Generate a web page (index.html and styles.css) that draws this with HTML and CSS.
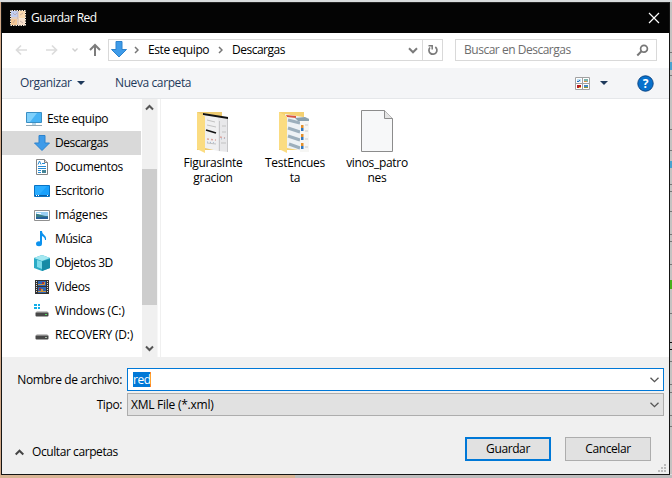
FILE: index.html
```html
<!DOCTYPE html>
<html lang="es">
<head>
<meta charset="utf-8">
<title>Guardar Red</title>
<link rel="stylesheet" href="styles.css">
</head>
<body>
<svg class="backdrop" width="672" height="478" shape-rendering="crispEdges">
  <rect width="672" height="478" fill="#d9dcde"/>
  <rect y="2" width="2" height="476" fill="#d2a988"/>
  <rect y="475" width="295" height="3" fill="#d9b695"/>
  <rect x="295" y="475" width="377" height="3" fill="#bdbdbd"/>
  <rect x="670" y="2" width="2" height="472" fill="#c4c2c1"/>
  <path d="M670 52.500h2M670 75.500h2M670 129.500h2M670 150.500h2M670 184.500h2M670 191.500h2M670 211.500h2M670 234.500h2M670 241.500h2M670 264.500h2M670 313.500h2M670 361.500h2M670 384.500h2M670 392.500h2M670 415.500h2M670 426.500h2" stroke="#777"/>
  <path d="M670 342.500h2M670 349.500h2" stroke="#111"/>
  <path d="M671 62v8M671 161v7" stroke="#4aa3cf" stroke-width="2"/>
  <path d="M671 280v9" stroke="#48b01c" stroke-width="2"/>
</svg>
<main class="dialog">
  <header class="titlebar">
    <svg class="app-icon" width="16" height="16" viewBox="0 0 16 16">
      <rect width="16" height="16" fill="#f4e8d8"/>
      <path d="M1 1h7v6H1z" fill="#c0cdf0"/><path d="M9 1h6v7H9z" fill="#fad9ae"/><path d="M1 9h6v6H1z" fill="#f5c795"/><path d="M8 9h7v6H8z" fill="#f8e1cc"/>
      <path d="M3 3l2 2 2-2M10 5l3-2M3 13l2-3M10 11l3 2M8 1v14M1 8h7" stroke="#b79f9c" stroke-width=".7" fill="none"/>
      <rect x=".5" y=".5" width="15" height="15" fill="none" stroke="#111" stroke-dasharray="1 1.500"/>
    </svg>
    <span class="t-title">Guardar Red</span>
    <svg class="close" width="12" height="12" viewBox="0 0 12 12"><path d="M1 1l10 10M11 1L1 11" stroke="#fff" stroke-width="1.200"/></svg>
  </header>
  <nav class="navbar">
    <svg class="nav-arrows" width="88" height="22" viewBox="0 0 88 22" fill="none">
      <path d="M12 11H1.500M6 6.500L1.500 11l4.500 4.500" stroke="#dcdcdc" stroke-width="1.700"/>
      <path d="M31 11h10.500M37 6.500l4.500 4.500-4.500 4.500" stroke="#dcdcdc" stroke-width="1.700"/>
      <path d="M57.500 9.500l2.500 2.500 2.500-2.500" stroke="#cfcfcf" stroke-width="1.400"/>
      <path d="M80 17V6M75 11l5-5 5 5" stroke="#7c7c7c" stroke-width="2"/>
    </svg>
    <div class="address">
      <svg class="addr-down" width="16" height="17" viewBox="0 0 16 17"><path d="M5 .5h6v8h4.500L8 16 .5 8.500H5z" fill="#3e9be9" stroke="#2d83cd"/></svg>
      <svg class="crumb" width="5" height="8" viewBox="0 0 5 8"><path d="M1 1l3 3-3 3"/></svg>
      <span class="t-este">Este equipo</span>
      <svg class="crumb second" width="5" height="8" viewBox="0 0 5 8"><path d="M1 1l3 3-3 3"/></svg>
      <span class="t-desc">Descargas</span>
      <svg class="addr-chev" width="10" height="7" viewBox="0 0 10 7"><path d="M1 1.300l4 4 4-4" fill="none" stroke="#7b7b7b" stroke-width="2"/></svg>
      <div class="refresh"><svg width="12" height="12" viewBox="0 0 12 12"><path d="M8.300 3A4 4 0 1 1 3 3.500" fill="none" stroke="#7b7b7b" stroke-width="1.700"/><path d="M1.500 1.800h3.700v3.700" fill="none" stroke="#7b7b7b" stroke-width="1.500"/></svg></div>
    </div>
    <div class="search">
      <span class="t-search">Buscar en Descargas</span>
      <svg width="13" height="13" viewBox="0 0 13 13" fill="none" stroke="#777"><circle cx="8" cy="4.700" r="3.400" stroke-width="1.700"/><path d="M5.700 7L1.300 11.500" stroke-width="2"/></svg>
    </div>
  </nav>
  <div class="toolbar">
    <span class="t-org">Organizar</span><i class="caret"></i>
    <span class="t-nueva">Nueva carpeta</span>
    <svg class="view" width="15" height="13" viewBox="0 0 15 13">
      <path d="M.5.500h14v12H.5zM7.500.5v12M.5 6.500h14" fill="#fff" stroke="#a2a2a2"/>
      <path d="M2 2h4v3H2z" fill="#bfe0f5"/><path d="M2 4h2V3h1v1H4v1H2z" fill="#286cc0"/><path d="M9 2h4v3H9z" fill="#7db3ad"/><path d="M9 4h3v1H9z" fill="#d59648"/>
      <path d="M2 8h4v3H2z" fill="#b31b20"/><path d="M4 10h2v1H4z" fill="#f0bd28"/><path d="M9 8h4v3H9z" fill="#438abf"/><path d="M9 10h4v1H9z" fill="#96952d"/>
    </svg>
    <i class="caret view-caret"></i>
    <svg class="help" width="17" height="17" viewBox="0 0 17 17"><circle cx="8.500" cy="8.500" r="7.700" fill="#0871cc" stroke="#0a4585"/><text x="8.500" y="13" text-anchor="middle">?</text></svg>
  </div>
  <section class="content">
    <aside class="tree">
      <div class="row root"><svg width="18" height="16" viewBox="0 0 18 16"><path d="M1.500 1.500h15v10h-15z" fill="#47b3f5" stroke="#3a8fc4"/><path d="M2 2h10L5 11H2z" fill="#7fd0fb"/><path d="M7 12h4v2H7z" fill="#b6d7e9"/><path d="M1 14.500h16" stroke="#91a7b4"/></svg><span class="t-este">Este equipo</span></div>
      <div class="row selected"><svg width="16" height="16" viewBox="0 0 16 16"><path d="M5 .5h6v7.500h4.500L8 15.500.5 8H5z" fill="#3e9be9" stroke="#2d83cd"/></svg><span class="t-desc">Descargas</span></div>
      <div class="row"><svg width="16" height="16" viewBox="0 0 16 16"><path d="M2.500.500h8l3 3v12h-11z" fill="#fff" stroke="#858585"/><path d="M10.500.500v3h3" fill="#ddd" stroke="#858585"/><path d="M4 5.500L5.500 2 7 5.500M8 4.500h3M4 7.500h8M4 9.500h8M4 11.500h3M4 13.500h3" fill="none" stroke="#268bd4"/><path d="M8 11h4v3H8z" fill="#438497"/></svg><span class="t-docs">Documentos</span></div>
      <div class="row"><svg width="16" height="16" viewBox="0 0 16 16"><path d="M.5 2.500h15v11H.5z" fill="#18a0fc" stroke="#0873c4"/><path d="M1 3h12L5 12H1z" fill="#2badff"/><path d="M1 12.500h14" stroke="#075ca6"/><path d="M2 12.500h1M4 12.500h1M13 12.500h1" stroke="#fff"/></svg><span class="t-esc">Escritorio</span></div>
      <div class="row"><svg width="16" height="16" viewBox="0 0 16 16"><path d="M.5 3.500h15v10H.5z" fill="#fff" stroke="#909090"/><path d="M2 5h12v7H2z" fill="#9bd0f4"/><path d="M2 7c4 0 6 2 12 2v3H2z" fill="#3b7e85"/><path d="M2 10c4 1 7-1 12 0v2H2z" fill="#255f9c"/><path d="M3 6h4v1H3z" fill="#fff"/></svg><span class="t-img">Imágenes</span></div>
      <div class="row"><svg width="16" height="16" viewBox="0 0 16 16"><ellipse cx="5" cy="12.800" rx="3" ry="2.500" fill="#0c92ee"/><path d="M6 0h2c0 4 5 4 4 9h-1c0-2-1-3-3-4v8H6z" fill="#0c92ee"/></svg><span class="t-mus">Música</span></div>
      <div class="row"><svg width="16" height="16" viewBox="0 0 16 16"><path d="M0 3l8-3 8 3v10l-8 3-8-3z" fill="#2babc6"/><path d="M0 3l8-3 8 3-8 3z" fill="#a5e8f1"/><path d="M3 5l5 1.500V14l-5-2z" fill="#7cdbea"/><path d="M8 6.500L16 4v9l-8 3z" fill="#178ba6"/></svg><span class="t-obj">Objetos 3D</span></div>
      <div class="row"><svg width="16" height="16" viewBox="0 0 16 16"><path d="M1 1h14v14H1z" fill="#333"/><path d="M2.500 2v12M13.500 2v12" stroke="#ddd" stroke-width="1" stroke-dasharray="1 1"/><path d="M4 2h8v5H4zM4 8h8v6H4z" fill="#2e66b5"/><path d="M4 5h4V3h3v3H4zM4 12h3v-2h2v2h3v1H4z" fill="#cf923a"/><path d="M8 3h2v2H8zM5 9h2v2H5z" fill="#9c3240"/></svg><span class="t-vid">Videos</span></div>
      <div class="row"><svg width="16" height="16" viewBox="0 0 16 16"><path d="M0 1h3v2H0zM4 1h2v2H4zM0 4h3v2H0zM4 4h2v2H4z" fill="#12aee8"/><path d="M3 8h10l2 2H1z" fill="#c6c6c6"/><rect x="1.500" y="9.500" width="13" height="4" rx="1" fill="#484848"/><path d="M11 11.500h2" stroke="#52db5e"/></svg><span class="t-win">Windows (C:)</span></div>
      <div class="row"><svg width="16" height="16" viewBox="0 0 16 16"><path d="M3 7h10l2 2H1z" fill="#c6c6c6"/><rect x="1.500" y="8.500" width="13" height="4" rx="1" fill="#484848"/><path d="M11 10.500h2" stroke="#a4b7a5"/></svg><span class="t-rec">RECOVERY (D:)</span></div>
    </aside>
    <div class="scrollbar">
      <svg width="9" height="7" viewBox="0 0 9 7"><path d="M1 5.500L4.500 2 8 5.500"/></svg>
      <i class="thumb"></i>
      <svg class="scroll-down" width="9" height="7" viewBox="0 0 9 7"><path d="M1 1.500L4.500 5 8 1.500"/></svg>
    </div>
    <div class="files">
      <figure>
        <svg width="48" height="48" viewBox="0 0 48 48"><path d="M8 4h25v38H8z" fill="#edca70"/><path d="M14 5l15 3v35l-13-3z" fill="#f0f0f1"/><path d="M29 8l10 1v35l-10-1z" fill="#e8e8ea"/><path d="M14 5l25 4v2L14 7z" fill="#111"/><path d="M30.500 13v30M38.500 11v33" stroke="#c6c6c8"/><path d="M17 22l10 3" stroke="#111" stroke-width="1.600"/><path d="M18 12l8 2M18 17l9 2M18 35l9 1M33 18h4M33 24h4M32 35h5" stroke="#c2c2c2"/><path d="M18 31l9 1M31 29l5 1" stroke="#dba6a0" stroke-width="1.500" stroke-dasharray="2 2"/><path d="M18 34l9 1M32 31l5-1" stroke="#9eb2cb" stroke-dasharray="1 2"/><path d="M8 4l8 4.500V45L8 41z" fill="#fbdc81"/></svg>
        <figcaption>FigurasInte<br>gracion</figcaption>
      </figure>
      <figure>
        <svg width="48" height="48" viewBox="0 0 48 48"><path d="M8 4h25v38H8z" fill="#f5d172"/><path d="M14 6l24 4v34l-22-4z" fill="#eef2f5"/><path d="M15 7l10 1v2l-9-1z" fill="#d95341"/><path d="M17 12l12 3M17 20l12 4M17 28l12 4M18 36l11 4" stroke="#9dafbc" stroke-width="3"/><path d="M29 11h9v33h-9z" fill="#f6f6f4"/><path d="M24 10l10-1 4 2v2H27z" fill="#8ba1ae"/><path d="M30 17h2.500v3H30zM30 26h2.500v3H30zM30 35h2.500v3H30z" fill="#e4902b"/><path d="M30 20h2.500v3H30zM30 29h2.500v3H30zM30 38h2.500v3H30z" fill="#3478bd"/><path d="M34 17h3M34 23h3M34 31h3M34 39h3" stroke="#ccc"/><path d="M8 4l8 4.500V45L8 41z" fill="#fbdc81"/></svg>
        <figcaption>TestEncues<br>ta</figcaption>
      </figure>
      <figure>
        <svg width="48" height="48" viewBox="0 0 48 48"><path d="M8.500 2.500h23l8 8v33h-31z" fill="#f7f8f9" stroke="#8c8c8c"/><path d="M31.500 2.500v8h8" fill="#e4e4e4" stroke="#8c8c8c"/></svg>
        <figcaption>vinos_patro<br>nes</figcaption>
      </figure>
    </div>
  </section>
  <footer class="footer">
    <div class="field"><label class="t-nombre">Nombre de archivo:</label><div class="box name"><span class="picked">red</span><svg width="9" height="6" viewBox="0 0 9 6"><path d="M.5.700l4 4 4-4"/></svg></div></div>
    <div class="field"><label class="t-tipo">Tipo:</label><div class="box type"><span class="t-xml">XML File (*.xml)</span><svg width="9" height="6" viewBox="0 0 9 6"><path d="M.5.700l4 4 4-4"/></svg></div></div>
    <div class="actions">
      <svg class="fold" width="9" height="7" viewBox="0 0 9 7"><path d="M.7 5.500l3.800-3.800 3.800 3.800" fill="none" stroke="#444" stroke-width="2"/></svg>
      <span class="t-ocu">Ocultar carpetas</span>
      <div class="button primary"><span class="t-gua">Guardar</span></div>
      <div class="button"><span class="t-can">Cancelar</span></div>
    </div>
    <svg class="grip" width="8" height="8" viewBox="0 0 8 8"><path d="M6 0h2v2H6zM3 3h2v2H3zM6 3h2v2H6zM0 6h2v2H0zM3 6h2v2H3zM6 6h2v2H6z" fill="#bcbcbc"/></svg>
  </footer>
</main>
</body>
</html>
```
FILE: styles.css
```css
* { box-sizing: border-box; }
body { margin: 0; width: 672px; height: 478px; overflow: hidden; padding: 2px 0 0 1px; font: 12px/16px "Open Sans", "Noto Sans", sans-serif; letter-spacing: -0.4px; color: #000; }
svg { display: block; flex: none; }
span, label { white-space: nowrap; }
.backdrop { position: absolute; inset: 0; z-index: -1; }
.dialog { width: 669px; height: 473px; border: 1px solid #151515; border-top-color: #252525; background: #fff; display: flex; flex-direction: column; }
.titlebar { height: 30px; background: #040404; color: #fff; display: flex; align-items: center; padding: 0 9px 0 8px; }
.titlebar span { margin-left: 5px; }
.t-title { letter-spacing: -0.5px; }
.close { margin-left: auto; margin-top: -1px; }
.navbar { height: 35px; display: flex; padding: 6px 12px 0 13px; }
.nav-arrows { margin-right: 5px; }
.address { width: 335px; height: 22px; border: 1px solid #d9d9d9; display: flex; align-items: center; }
.addr-down { margin-left: 2px; margin-top: -2px; }
.crumb { margin-left: 7px; fill: none; stroke: #777; stroke-width: 1.5; }
.address .t-este { margin-left: 9px; width: 61px; }
.crumb.second { margin-left: 9px; }
.address .t-desc { margin-left: 9px; }
.t-desc { letter-spacing: -0.5px; }
.addr-chev { margin-left: auto; margin-right: 4px; }
.refresh { width: 20px; height: 20px; border-left: 1px solid #d9d9d9; padding: 4px 0 0 4px; }
.search { width: 202px; height: 22px; margin-left: 12px; border: 1px solid #d9d9d9; display: flex; align-items: center; justify-content: space-between; padding: 0 7px 0 8px; color: #6d6d6d; }
.t-search { letter-spacing: -0.48px; }
.toolbar { height: 31px; background: #f4f5f7; border-bottom: 1px solid #e5e7ea; color: #1e395b; display: flex; align-items: center; padding: 0 15px 0 18px; }
.t-org { width: 51px; }
.caret { width: 8px; height: 4px; background: #1e395b; clip-path: polygon(0 0, 100% 0, 50% 100%); margin-left: 6px; }
.t-nueva { margin-left: 30px; }
.view { margin-left: auto; }
.view-caret { margin-left: 10px; margin-right: 29px; }
.help text { font: bold 12px "Open Sans", sans-serif; fill: #fff; letter-spacing: 0; }
.content { height: 258px; display: flex; }
.tree { width: 139px; padding-top: 8px; }
.row { height: 24px; display: flex; align-items: center; padding-left: 32px; }
.row span { margin-left: 5px; }
.row.root { padding-left: 23px; }
.row.root span { margin-left: 4px; }
.t-docs { letter-spacing: -0.35px; }
.t-win, .t-img { letter-spacing: -0.2px; }
.t-rec { letter-spacing: -0.23px; }
.t-este { letter-spacing: -0.4px; }
.t-obj { letter-spacing: -0.45px; }
.selected { background: #d9d9d9; }
.scrollbar { width: 16px; margin-left: 1px; background: #f0f0f0; display: flex; flex-direction: column; align-items: center; padding: 5px 0; border-right: 1px solid #f7f7f7; }
.scrollbar path { fill: none; stroke: #555; stroke-width: 2; }
.thumb { width: 15px; height: 136px; background: #cdcdcd; margin-top: 58px; }
.scroll-down { margin-top: auto; }
.files { flex: 1; margin-left: 2px; border-left: 1px solid #f0f0f0; display: flex; padding: 9px 0 0 11px; }
figure { margin: 0; width: 82px; display: flex; flex-direction: column; align-items: center; }
figcaption { text-align: center; line-height: 15px; letter-spacing: -0.3px; margin-top: -1px; }
.footer { flex: 1; background: #f0f0f0; padding-top: 11px; position: relative; }
.field { display: flex; align-items: center; height: 23px; margin-bottom: 2px; }
.field label { width: 120px; text-align: right; margin-right: 5px; padding-top: 1px; }
.t-nombre { letter-spacing: -0.33px; }
.box { width: 537px; height: 23px; border: 1px solid #adadad; background: #e1e1e1; display: flex; align-items: center; justify-content: space-between; padding: 0 4px 0 3px; }
.box path { fill: none; stroke: #555; stroke-width: 1.3; }
.t-xml { letter-spacing: -0.25px; padding-top: 1px; }
.box.name { border-color: #0078d7; background: #fff; padding-left: 5px; }
.picked { background: #0078d7; color: #fff; border-right: 1px solid #ff8728; line-height: 15px; letter-spacing: -0.5px; }
.actions { display: flex; height: 24px; margin-top: 21px; align-items: center; padding-left: 13px; }
.t-ocu { margin-left: 8px; width: 86px; margin-top: 5px; letter-spacing: -0.42px; }
.fold { margin-top: 7px; }
.button { width: 86px; height: 24px; margin-left: 14px; border: 1px solid #adadad; background: #e1e1e1; display: flex; align-items: center; justify-content: center; }
.button.primary { margin-left: 347px; border: 2px solid #0078d7; }
.grip { position: absolute; right: 3px; bottom: 2px; }
```
